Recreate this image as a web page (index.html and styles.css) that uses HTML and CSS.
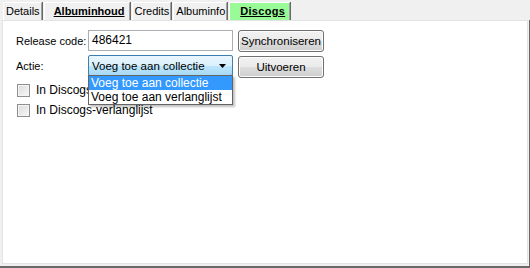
FILE: index.html
```html
<!DOCTYPE html>
<html>
<head>
<meta charset="utf-8">
<link rel="stylesheet" href="styles.css">
</head>
<body>
<div class="window">
  <div class="tabs">
    <div class="tab">Details</div>
    <div class="tab bold">Albuminhoud</div>
    <div class="tab">Credits</div>
    <div class="tab">Albuminfo</div>
    <div class="tab bold green">Discogs</div>
  </div>
  <div class="panel">
    <div class="row">
      <span class="label">Release code:</span>
      <div class="textbox">486421</div>
      <div class="button">Synchroniseren</div>
    </div>
    <div class="row row2">
      <span class="label">Actie:</span>
      <div class="combo-wrap">
        <div class="combo">
          <span>Voeg toe aan collectie</span>
          <svg class="arrow" width="7" height="4" viewBox="0 0 7 4"><path d="M0 0H7L3.5 4Z" fill="#000"/></svg>
        </div>
        <div class="dropdown">
          <div class="item selected">Voeg toe aan collectie</div>
          <div class="item">Voeg toe aan verlanglijst</div>
        </div>
      </div>
      <div class="button">Uitvoeren</div>
    </div>
    <div class="check first"><span class="box"></span><span>In Discogs-collectie</span></div>
    <div class="check"><span class="box"></span><span>In Discogs-verlanglijst</span></div>
  </div>
</div>
</body>
</html>
```
FILE: styles.css
```css
* { box-sizing: border-box; }
html, body { margin: 0; padding: 0; }
body {
  width: 530px;
  height: 268px;
  background: #f0f0f0;
  font-family: "Liberation Sans", Arial, sans-serif;
  font-size: 11px;
  color: #000;
  overflow: hidden;
}
.window {
  width: 530px;
  height: 268px;
  display: flex;
  flex-direction: column;
  border-bottom: 2px solid #6a6a6a;
}
.tabs {
  height: 20px;
  display: flex;
  align-items: flex-end;
  padding-left: 3px;
  font-size: 11px;
}
.tab {
  height: 18px;
  line-height: 16px;
  padding: 0 1px 0 2px;
  border-top: 1px solid #fff;
  border-left: 1px solid #fff;
  border-right: 1px solid #a0a0a0;
  box-shadow: 1px 0 0 #696969;
  margin-right: 2px;
  background: #f0f0f0;
  white-space: nowrap;
}
.tab.bold {
  font-weight: bold;
  text-decoration: underline;
  padding: 0 4px 0 9px;
}
.tab.green {
  background: #98fb98;
  padding: 0 4px 0 10px;
  letter-spacing: 0.3px;
}
.panel {
  flex: 1;
  margin: 0 3px 2px 2px;
  background: #fff;
  border: 1px solid #e3e3e3;
  border-right: none;
  box-shadow: 1px 0 0 #e3e3e3;
  position: relative;
  padding: 9px 0 0 13px;
}
.panel::after {
  content: "";
  position: absolute;
  top: -1px;
  right: -4px;
  bottom: -3px;
  width: 2px;
  background: #6a6a6a;
}
.row {
  display: flex;
  align-items: center;
  height: 21px;
}
.row2 { margin-top: 4px; }
.label {
  width: 72px;
  flex-shrink: 0;
  white-space: nowrap;
  font-size: 11px;
}
.textbox {
  width: 145px;
  height: 21px;
  flex-shrink: 0;
  border: 1px solid #abadb3;
  padding: 2px 0 0 3px;
  line-height: 15px;
  font-size: 12px;
}
.button {
  margin-left: 5px;
  width: 86px;
  height: 22px;
  flex-shrink: 0;
  border: 1px solid #707070;
  border-radius: 3px;
  background: linear-gradient(#f2f2f2 0%, #ebebeb 50%, #dddddd 51%, #cfcfcf 100%);
  box-shadow: inset 0 0 0 1px #fcfcfc;
  display: flex;
  align-items: center;
  justify-content: center;
  white-space: nowrap;
  font-size: 11.5px;
}
.row2 .button { margin-top: 2px; }
.combo-wrap {
  position: relative;
  width: 145px;
  height: 21px;
  flex-shrink: 0;
  font-size: 11.5px;
}
.combo {
  width: 145px;
  height: 21px;
  border: 1px solid #3c7fb1;
  border-radius: 2px;
  background: linear-gradient(#eaf6fd 0%, #d9f0fc 50%, #bee6fd 51%, #a7d9f5 100%);
  display: flex;
  align-items: center;
  justify-content: space-between;
  padding: 0 6px 0 3px;
  white-space: nowrap;
}
.arrow { margin-top: 1px; }
.dropdown {
  position: absolute;
  top: 20px;
  left: 0;
  width: 145px;
  border: 1px solid #646464;
  background: #fff;
  box-shadow: 2px 2px 2px rgba(0,0,0,0.25);
  z-index: 2;
  white-space: nowrap;
  font-size: 12px;
}
.item {
  height: 14px;
  line-height: 14px;
  padding-left: 2px;
}
.item.selected {
  background: #3399ff;
  color: #fff;
}
.check {
  display: flex;
  align-items: center;
  height: 14px;
  margin-top: 6px;
  padding-left: 1px;
  font-size: 12px;
  white-space: nowrap;
}
.check.first { margin-top: 7px; }
.box {
  width: 13px;
  height: 13px;
  flex-shrink: 0;
  border: 1px solid #8f8f8f;
  background: linear-gradient(135deg, #dcdcdc, #f6f6f6);
  box-shadow: inset 0 0 0 1px #f4f4f4;
  margin-right: 6px;
}
```
